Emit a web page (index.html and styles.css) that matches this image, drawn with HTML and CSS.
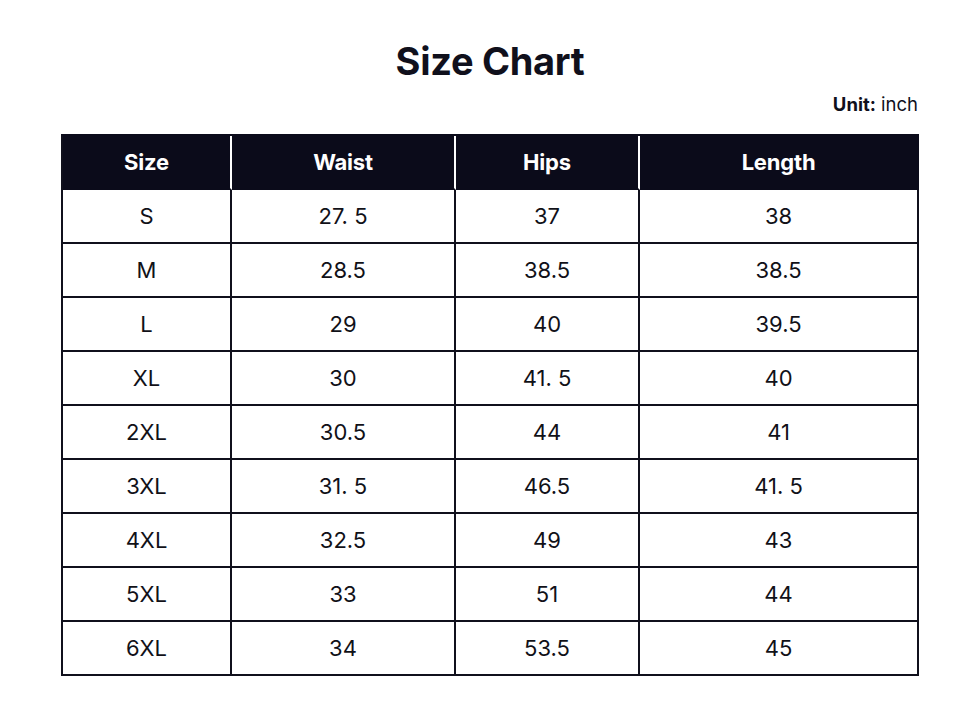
FILE: index.html
```html
<!DOCTYPE html>
<html lang="en">
<head>
<meta charset="utf-8">
<title>Size Chart</title>
<link rel="stylesheet" href="styles.css">
</head>
<body>
<main class="chart">
  <h1 class="title">Size Chart</h1>
  <p class="unit"><strong>Unit:</strong> inch</p>
  <table class="sizes">
    <colgroup>
      <col class="c1"><col class="c2"><col class="c3"><col class="c4">
    </colgroup>
    <thead>
      <tr><th>Size</th><th>Waist</th><th>Hips</th><th>Length</th></tr>
    </thead>
    <tbody>
      <tr><td>S</td><td>27. 5</td><td>37</td><td>38</td></tr>
      <tr><td>M</td><td>28.5</td><td>38.5</td><td>38.5</td></tr>
      <tr><td>L</td><td>29</td><td>40</td><td>39.5</td></tr>
      <tr><td>XL</td><td>30</td><td>41. 5</td><td>40</td></tr>
      <tr><td>2XL</td><td>30.5</td><td>44</td><td>41</td></tr>
      <tr><td>3XL</td><td>31. 5</td><td>46.5</td><td>41. 5</td></tr>
      <tr><td>4XL</td><td>32.5</td><td>49</td><td>43</td></tr>
      <tr><td>5XL</td><td>33</td><td>51</td><td>44</td></tr>
      <tr><td>6XL</td><td>34</td><td>53.5</td><td>45</td></tr>
    </tbody>
  </table>
</main>
</body>
</html>
```
FILE: styles.css
```css
* { box-sizing: border-box; }
html, body {
  margin: 0;
  padding: 0;
  background: #ffffff;
}
body {
  font-family: Inter, "Noto Sans", "Liberation Sans", sans-serif;
  color: #10101c;
}
.chart {
  width: 858px;
  margin: 0 auto;
  padding-top: 39px;
}
.title {
  margin: 0;
  font-size: 38px;
  line-height: 44px;
  font-weight: 700;
  text-align: center;
  letter-spacing: -0.3px;
}
.unit {
  margin: 11px 0 0;
  font-size: 18.5px;
  line-height: 20px;
  text-align: right;
  padding-right: 1px;
}
.unit strong { font-weight: 700; }
.sizes {
  margin-top: 20px;
  width: 858px;
  table-layout: fixed;
  border-collapse: separate;
  border-spacing: 0;
  border-left: 2px solid #10101c;
  border-top: 2px solid #0b0b1a;
}
.c1 { width: 169px; }
.c2 { width: 224px; }
.c3 { width: 184px; }
.c4 { width: 279px; }
.sizes th {
  background: #0b0b1a;
  color: #ffffff;
  font-size: 22px;
  font-weight: 700;
  letter-spacing: -0.2px;
  height: 54px;
  padding: 0;
  text-align: center;
  border-right: 2px solid #ffffff;
  border-bottom: 2px solid #0b0b1a;
}
.sizes th:last-child { border-right-color: #0b0b1a; }
.sizes td {
  font-size: 22px;
  font-weight: 400;
  height: 54px;
  padding: 0;
  text-align: center;
  border-right: 2px solid #10101c;
  border-bottom: 2px solid #10101c;
  color: #111118;
}
```
